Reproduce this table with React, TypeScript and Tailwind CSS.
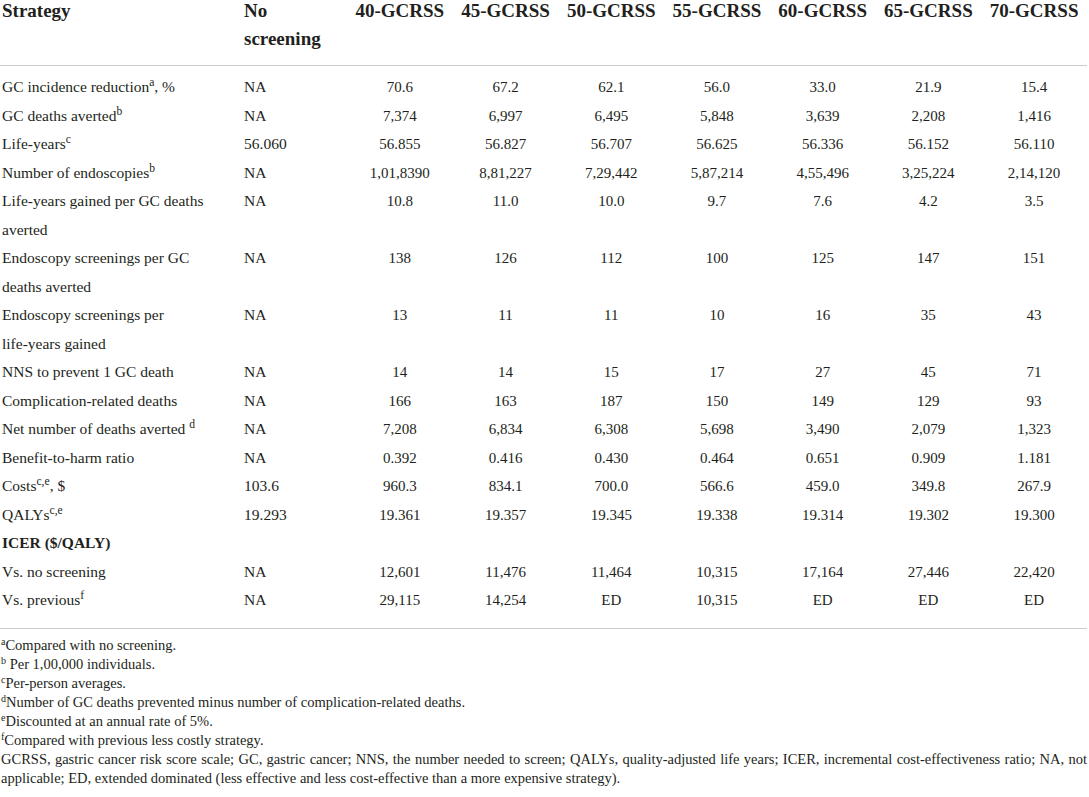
import React from "react"

type Row = {
  label: React.ReactNode
  none?: string
  values?: string[]
  bold?: boolean
}

const strategies = ["40-GCRSS", "45-GCRSS", "50-GCRSS", "55-GCRSS", "60-GCRSS", "65-GCRSS", "70-GCRSS"]

const rows: Row[] = [
  { label: <>GC incidence reduction<sup>a</sup>, %</>, none: "NA", values: ["70.6", "67.2", "62.1", "56.0", "33.0", "21.9", "15.4"] },
  { label: <>GC deaths averted<sup>b</sup></>, none: "NA", values: ["7,374", "6,997", "6,495", "5,848", "3,639", "2,208", "1,416"] },
  { label: <>Life-years<sup>c</sup></>, none: "56.060", values: ["56.855", "56.827", "56.707", "56.625", "56.336", "56.152", "56.110"] },
  { label: <>Number of endoscopies<sup>b</sup></>, none: "NA", values: ["1,01,8390", "8,81,227", "7,29,442", "5,87,214", "4,55,496", "3,25,224", "2,14,120"] },
  { label: <>Life-years gained per GC deaths<br />averted</>, none: "NA", values: ["10.8", "11.0", "10.0", "9.7", "7.6", "4.2", "3.5"] },
  { label: <>Endoscopy screenings per GC<br />deaths averted</>, none: "NA", values: ["138", "126", "112", "100", "125", "147", "151"] },
  { label: <>Endoscopy screenings per<br />life-years gained</>, none: "NA", values: ["13", "11", "11", "10", "16", "35", "43"] },
  { label: "NNS to prevent 1 GC death", none: "NA", values: ["14", "14", "15", "17", "27", "45", "71"] },
  { label: "Complication-related deaths", none: "NA", values: ["166", "163", "187", "150", "149", "129", "93"] },
  { label: <>Net number of deaths averted <sup>d</sup></>, none: "NA", values: ["7,208", "6,834", "6,308", "5,698", "3,490", "2,079", "1,323"] },
  { label: "Benefit-to-harm ratio", none: "NA", values: ["0.392", "0.416", "0.430", "0.464", "0.651", "0.909", "1.181"] },
  { label: <>Costs<sup>c,e</sup>, $</>, none: "103.6", values: ["960.3", "834.1", "700.0", "566.6", "459.0", "349.8", "267.9"] },
  { label: <>QALYs<sup>c,e</sup></>, none: "19.293", values: ["19.361", "19.357", "19.345", "19.338", "19.314", "19.302", "19.300"] },
  { label: "ICER ($/QALY)", bold: true },
  { label: "Vs. no screening", none: "NA", values: ["12,601", "11,476", "11,464", "10,315", "17,164", "27,446", "22,420"] },
  { label: <>Vs. previous<sup>f</sup></>, none: "NA", values: ["29,115", "14,254", "ED", "10,315", "ED", "ED", "ED"] },
]

const notes: [string, string][] = [
  ["a", "Compared with no screening."],
  ["b", " Per 1,00,000 individuals."],
  ["c", "Per-person averages."],
  ["d", "Number of GC deaths prevented minus number of complication-related deaths."],
  ["e", "Discounted at an annual rate of 5%."],
  ["f", "Compared with previous less costly strategy."],
]

export default function App() {
  return (
    <div className="w-[1089px] h-[797px] overflow-hidden bg-white text-[#231f20] font-['Liberation_Serif','Times_New_Roman',serif]">
      <table className="w-[1087px] table-fixed border-collapse -mt-[3px]">
        <colgroup>
          <col className="w-[244px]" />
          <col className="w-[103px]" />
          {strategies.map((s) => (
            <col key={s} />
          ))}
        </colgroup>
        <thead>
          <tr className="border-b border-[#cccccc]">
            <th className="pl-[2px] pb-[12px] align-top text-left text-[19px] leading-[28px] font-bold">Strategy</th>
            <th className="pb-[12px] align-top text-left text-[19px] leading-[28px] font-bold">
              No
              <br />
              screening
            </th>
            {strategies.map((s) => (
              <th key={s} className="pb-[12px] align-top text-center text-[19px] leading-[28px] font-bold whitespace-nowrap">
                {s}
              </th>
            ))}
          </tr>
        </thead>
        <tbody>
          {rows.map((r, i) => {
            const pad = i === 0 ? "pt-[7px]" : i === rows.length - 1 ? "pb-[13px]" : ""
            return (
              <tr key={i} className={i === rows.length - 1 ? "border-b border-[#cccccc]" : ""}>
                <td className={`pl-[2px] align-top text-[15.5px] leading-[28.5px] ${r.bold ? "font-bold" : ""} ${pad}`}>{r.label}</td>
                <td className={`align-top text-[15.5px] leading-[28.5px] ${pad}`}>{r.none}</td>
                {strategies.map((s, j) => (
                  <td key={s} className={`align-top text-center text-[15px] leading-[28.5px] ${pad}`}>
                    {r.values ? r.values[j] : ""}
                  </td>
                ))}
              </tr>
            )
          })}
        </tbody>
      </table>
      <div className="w-[1087px] pt-[7px] pl-[1px] text-[14.5px] leading-[19px]">
        {notes.map(([k, t]) => (
          <div key={k}>
            <sup className="text-[10px]">{k}</sup>
            {t}
          </div>
        ))}
        <div className="text-justify [text-align-last:justify]">
          GCRSS, gastric cancer risk score scale; GC, gastric cancer; NNS, the number needed to screen; QALYs, quality-adjusted life years; ICER, incremental cost-effectiveness ratio; NA, not
        </div>
        <div>applicable; ED, extended dominated (less effective and less cost-effective than a more expensive strategy).</div>
      </div>
    </div>
  )
}
